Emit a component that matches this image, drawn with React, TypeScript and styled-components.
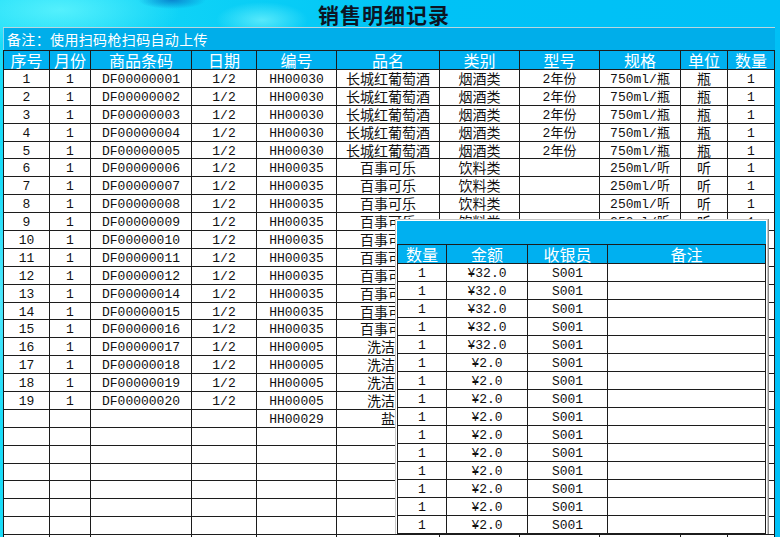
import React from "react";
import styled, { createGlobalStyle } from "styled-components";

const Global = createGlobalStyle`
  html, body { margin: 0; padding: 0; overflow: hidden; background: #00c0f4; }
  * { box-sizing: border-box; }
`;

const CJK = `"Noto Sans CJK SC", "Noto Sans", sans-serif`;
const DATA_FONT = `"Liberation Mono", "Noto Sans CJK SC", monospace`;

const Page = styled.div`
  position: relative;
  width: 780px;
  height: 537px;
  overflow: hidden;
  display: flex;
  flex-direction: column;
  background:
    radial-gradient(ellipse 34px 9px at 172px 0px, #0a86d0 0%, rgba(10, 134, 208, 0) 100%),
    radial-gradient(ellipse 46px 18px at 262px 20px, rgba(150, 255, 255, 0.55) 0%, rgba(150, 255, 255, 0) 100%),
    radial-gradient(ellipse 120px 40px at 60px 10px, rgba(110, 250, 255, 0.7) 0%, rgba(110, 250, 255, 0) 100%),
    radial-gradient(ellipse 10px 120px at 0px 300px, rgba(120, 240, 255, 0.6) 0%, rgba(120, 240, 255, 0) 100%),
    linear-gradient(90deg, #1adcf8 0%, #08cdf6 35%, #00c2f6 55%, #00c0f6 100%);
`;

const TitleBar = styled.div`
  height: 27px;
  flex: none;
  display: flex;
  align-items: center;
  justify-content: center;
  padding-right: 12px;
  font-family: ${CJK};
  font-weight: 700;
  font-size: 21px;
  color: #0c1524;
  letter-spacing: 1px;
`;

const Sheet = styled.div`
  margin: 0 5px 0 3px;
  width: 772px;
  border-top: 1px solid #b9d6de;
  display: flex;
  flex-direction: column;
  flex: none;
`;

const Remark = styled.div`
  height: 22px;
  background: #00aeea;
  color: #ffffff;
  font-family: ${CJK};
  font-size: 14px;
  letter-spacing: 0.35px;
  display: flex;
  align-items: center;
  padding-left: 3px;
  border-left: 1px solid #8ad6ee;
`;

const MAIN_COLS = "46px 41px 101px 65px 80px 103px 80px 80px 81px 47px 47px";
const SIDE_COLS = "49px 81px 80px 158px";

const Row = styled.div<{ $cols: string; $head?: boolean; $h: number }>`
  display: grid;
  grid-template-columns: ${(p) => p.$cols};
  height: ${(p) => p.$h}px;
  background: ${(p) => (p.$head ? "#00b0f0" : "#ffffff")};
  border-left: 1px solid #1c1c1c;
  border-top: ${(p) => (p.$head ? "1px solid #1c1c1c" : "none")};
  flex: none;
`;

const HeadCell = styled.div`
  border-right: 1px solid #1c1c1c;
  border-bottom: 1px solid #1c1c1c;
  display: flex;
  align-items: center;
  justify-content: center;
  color: #ffffff;
  font-family: ${CJK};
  font-size: 16px;
  line-height: 18px;
  white-space: nowrap;
`;

const Cell = styled.div<{ $cjk?: boolean }>`
  border-right: 1px solid #1c1c1c;
  border-bottom: 1px solid #1c1c1c;
  display: flex;
  align-items: center;
  justify-content: center;
  padding-top: 3px;
  color: #111111;
  font-family: ${DATA_FONT};
  font-size: ${(p) => (p.$cjk ? "14px" : "13px")};
  line-height: 14px;
  overflow: hidden;
  white-space: nowrap;
`;

const Popup = styled.div`
  position: absolute;
  left: 395px;
  top: 219px;
  width: 373px;
  padding: 1px 1px 0 1px;
  background: #ffffff;
  border: 1px solid #c6c6c6;
  border-bottom: none;
  box-shadow: 1px 0 0 #8a8a8a;
  display: flex;
  flex-direction: column;
`;

const PopupBar = styled.div`
  height: 23px;
  background: #00b0f0;
  flex: none;
`;

const mainHeads = ["序号", "月份", "商品条码", "日期", "编号", "品名", "类别", "型号", "规格", "单位", "数量"];
const cjkCols = [5, 6, 9];

type MainRow = string[];

const mainRows: MainRow[] = [];
const codes = ["01", "02", "03", "04", "05", "06", "07", "08", "09", "10", "11", "12", "14", "15", "16", "17", "18", "19", "20"];
for (let i = 0; i < 19; i++) {
  const n = i + 1;
  let item: string[];
  if (n <= 5) item = ["HH00030", "长城红葡萄酒", "烟酒类", "2年份", "750ml/瓶", "瓶", "1"];
  else if (n <= 15) item = ["HH00035", "百事可乐", "饮料类", "", "250ml/听", "听", "1"];
  else item = ["HH00005", "洗洁精", "日用品", "", "500g/瓶", "瓶", "1"];
  mainRows.push([String(n), "1", "DF000000" + codes[i], "1/2", ...item]);
}
mainRows.push(["", "", "", "", "HH00029", "盐", "调味品", "", "400g/袋", "袋", "1"]);
for (let i = 0; i < 8; i++) mainRows.push(["", "", "", "", "", "", "", "", "", "", ""]);

const sideHeads = ["数量", "金额", "收银员", "备注"];
const sideRows: string[][] = [];
for (let i = 0; i < 15; i++) sideRows.push(["1", i < 5 ? "¥32.0" : "¥2.0", "S001", ""]);

export default function App() {
  return (
    <>
      <Global />
      <Page>
        <TitleBar>销售明细记录</TitleBar>
        <Sheet>
          <Remark>备注：使用扫码枪扫码自动上传</Remark>
          <Row $cols={MAIN_COLS} $head $h={20}>
            {mainHeads.map((h) => (
              <HeadCell key={h}>{h}</HeadCell>
            ))}
          </Row>
          {mainRows.map((r, ri) => (
            <Row key={ri} $cols={MAIN_COLS} $h={17.9}>
              {r.map((c, ci) => (
                <Cell key={ci} $cjk={cjkCols.includes(ci)}>
                  {c}
                </Cell>
              ))}
            </Row>
          ))}
        </Sheet>
        <Popup>
          <PopupBar />
          <Row $cols={SIDE_COLS} $head $h={20}>
            {sideHeads.map((h) => (
              <HeadCell key={h}>{h}</HeadCell>
            ))}
          </Row>
          {sideRows.map((r, ri) => (
            <Row key={ri} $cols={SIDE_COLS} $h={18}>
              {r.map((c, ci) => (
                <Cell key={ci}>{c}</Cell>
              ))}
            </Row>
          ))}
        </Popup>
      </Page>
    </>
  );
}
